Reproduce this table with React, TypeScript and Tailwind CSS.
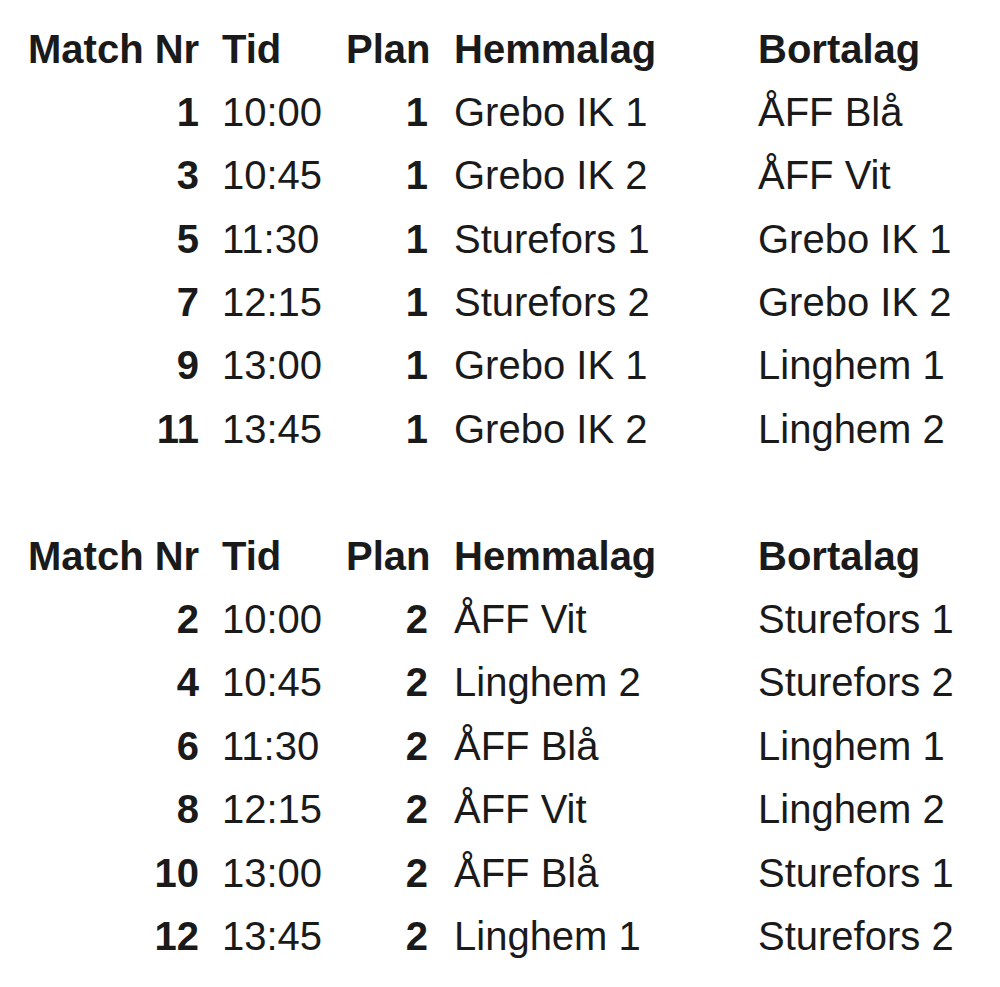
const rounds = [
  [
    [1, "10:00", 1, "Grebo IK 1", "ÅFF Blå"],
    [3, "10:45", 1, "Grebo IK 2", "ÅFF Vit"],
    [5, "11:30", 1, "Sturefors 1", "Grebo IK 1"],
    [7, "12:15", 1, "Sturefors 2", "Grebo IK 2"],
    [9, "13:00", 1, "Grebo IK 1", "Linghem 1"],
    [11, "13:45", 1, "Grebo IK 2", "Linghem 2"],
  ],
  [
    [2, "10:00", 2, "ÅFF Vit", "Sturefors 1"],
    [4, "10:45", 2, "Linghem 2", "Sturefors 2"],
    [6, "11:30", 2, "ÅFF Blå", "Linghem 1"],
    [8, "12:15", 2, "ÅFF Vit", "Linghem 2"],
    [10, "13:00", 2, "ÅFF Blå", "Sturefors 1"],
    [12, "13:45", 2, "Linghem 1", "Sturefors 2"],
  ],
] as const;

const row = "grid grid-cols-[171px_147px_82px_330px_1fr] h-[63.4px] leading-[63.4px]";

function Schedule({ games }: { games: (typeof rounds)[number] }) {
  return (
    <div>
      <div className={`${row} font-bold`}>
        <span className="text-right">Match Nr</span>
        <span className="pl-[23px]">Tid</span>
        <span className="text-right">Plan</span>
        <span className="pl-[26px]">Hemmalag</span>
        <span>Bortalag</span>
      </div>
      {games.map((g) => (
        <div key={g[0]} className={row}>
          <span className="text-right font-bold">{g[0]}</span>
          <span className="pl-[23px]">{g[1]}</span>
          <span className="text-right font-bold">{g[2]}</span>
          <span className="pl-[26px]">{g[3]}</span>
          <span>{g[4]}</span>
        </div>
      ))}
    </div>
  );
}

export default function App() {
  return (
    <div className="w-[1000px] h-[987px] bg-white pt-[17.5px] pl-[28px] text-[40px] text-[#1a1a1a] [font-family:Liberation_Sans,Arial,sans-serif] whitespace-nowrap">
      <Schedule games={rounds[0]} />
      <div className="h-[63.4px]" />
      <Schedule games={rounds[1]} />
    </div>
  );
}
